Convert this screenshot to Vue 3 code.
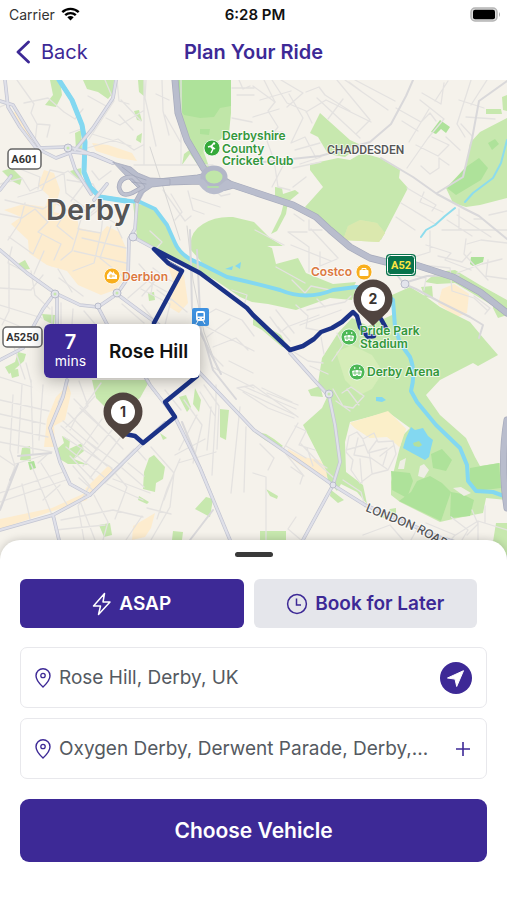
<script setup>
import { ref } from 'vue'

const pickup = ref('Rose Hill, Derby, UK')
const destination = ref('Oxygen Derby, Derwent Parade, Derby,...')
const mode = ref('asap')

const parks = [
  'M50 80H60L62 95L56 107L45 105L53 95Z',
  'M83 80H114L113 93L108 99L98 92L87 89Z',
  'M138 80H144L145 97L139 92Z',
  'M134 111L139 110L142 121L137 120Z M137 136L142 133L141 143L136 140Z',
  'M182 165L184 154L200 142L206 158L210 170L200 168L190 154Z',
  'M75 133L81 130L82 150L76 150Z M70 171L81 168L82 180L76 178Z',
  'M133 203L150 206L165 222L173 241L185 257L202 264L228 277L254 280L280 290L303 297L333 290L356 288L352 300L330 298L296 310L268 304L252 302L240 297L215 280L182 262L155 250L137 237Z',
  'M191 250Q188 233 203 224Q215 216 233 217L254 222L270 238L253 240L272 248L276 264L298 258L306 273L333 284L356 282L352 290L330 292L303 298L280 291L254 281L228 278L205 266Z',
  'M2 171L12 168L22 178L20 185L12 181Z',
  'M310 133L320 113L350 140L361 145L345 157L328 154L318 137Z',
  'M310 164L338 158L350 160L362 153L380 158L400 170L399 178L408 188L381 240H343L323 222L305 207L323 187L310 170Z',
  'M507 118L480 132L470 143L466 167L446 188L453 203L466 207L480 205L507 198Z',
  'M275 187L282 188L283 194L295 190L299 193L288 202L286 214L277 231L271 234L281 214L284 202L275 197Z',
  'M253 230L270 238L283 246H253Z',
  'M425 282L437 272L455 270L480 285L507 300V314L480 298L455 283L437 284Z',
  'M421 287L432 286L433 298L425 297Z M494 293L507 305V315L498 318L493 308Z',
  'M392 295L410 287L425 296L440 307L470 322L485 340L498 355L478 366L473 363L440 380L426 395L440 415L466 438L475 457L480 466L507 462V500L486 498L483 513L453 519L440 522L400 502L391 495V482L403 435L410 428L388 412L350 422L345 442L346 472L363 485L367 504L357 492L341 484L337 491L328 481L326 470L303 425L322 408L329 393L318 383L322 358L338 333L352 318L368 326L392 315Z',
  'M253 315L267 327L281 335L288 348L282 347L262 330L253 325Z',
  'M92 380H150L140 398L115 417L96 398Z',
  'M22 448L30 446L31 461L20 460Z M57 449L64 443L62 436L70 440L69 449L82 443L84 451L74 459L89 465L81 464L68 464L58 458Z',
  'M149 458L154 455L165 467L163 479L156 483L155 492L143 489L144 472Z',
  'M139 496L149 502L147 504L138 500Z M99 525L110 523L112 535L104 537Z',
  'M206 497L213 499L210 517L195 509Z M173 531L183 532L182 540H172Z',
  'M220 409L229 410L226 440L220 437Z M195 388L201 400L199 412L193 404Z M179 397L186 395L191 407L187 412Z',
  'M253 431L266 434L274 439L283 446L280 448L265 440Z M266 489L278 496L277 499L270 496Z',
  'M260 531H286V540H260Z M331 490L344 500L338 503L330 496Z',
  'M308 390L320 386L323 397L311 396Z M160 433L167 438L163 440Z',
  'M42 314L55 315L54 325L44 320Z M18 352L26 354L24 361L15 369L9 374L5 367L15 362Z M10 370L18 369L19 376L12 378Z',
  'M18 264L25 260L30 269L22 270Z M148 293L154 292L155 300L149 301Z',
  'M486 109L501 109L502 114L486 114Z M502 97L507 95V111L503 110Z',
  'M379 509L386 515L390 509L396 508V517L380 518Z M496 523H507V560L492 548Z'
]
const fields = [
  'M178 80H231V106L220 108L214 117L200 118L184 115L179 108Z',
  'M200 129L210 129L209 135L200 134Z',
  'M431 132L440 120L450 127L446 133L441 129L436 134Z',
  'M447 188L466 167L479 158L488 168L481 180L456 195Z',
  'M488 143L495 139L499 144L492 150Z',
  'M471 257L484 257L483 262L473 266L470 264Z',
  'M391 471L410 473L413 481L407 498L392 490Z',
  'M411 492L417 481L430 476L442 483L451 492L441 521L399 501Z',
  'M451 492L462 494L474 500L470 516L450 518Z',
  'M470 468L499 463L501 488L476 491L469 482Z',
  'M431 454L442 449L452 460L446 471L433 468Z',
  'M28 462L34 461L36 468L30 470Z'
]
const lawns = [
  'M336 352L352 345L372 355L383 372L372 389L360 395L345 380Z',
  'M343 240L348 226L360 220L377 223L385 233L379 242Z'
]
const commercial = [
  'M12 114L18 109L30 136L34 145L28 141Z',
  'M44 170L54 173L60 190L54 212L77 218L79 228L101 233L107 226L119 232L126 248L126 278L115 290L101 295L78 285L67 271L47 265L29 253L28 240L11 224L21 217L4 210L24 204L45 207L49 196L38 186Z',
  'M92 143L108 145L132 153L137 161L118 158L96 151Z',
  'M167 263L184 275L188 303L179 313L169 307L174 284Z',
  'M29 236L54 251L67 270L50 266L29 252Z',
  'M68 385L71 393L65 420L54 426L55 447L44 447L47 419L56 397Z',
  'M85 489L109 465L113 470L91 493Z M0 519L52 508L85 493L87 500L53 511L0 529Z',
  'M133 526L145 519L155 513L151 528L145 537L132 540Z',
  'M288 449L303 457L320 460L330 475L326 478L304 468L287 455Z',
  'M442 289L454 284L469 294L467 313L457 317L438 304Z',
  'M350 423L388 411L406 429L399 447L387 434L370 438L355 428Z'
]
const minor = [
  'M0 107L7 104M17 80L34 104L31 113L37 124L50 125L47 137M24 103L48 98L64 112M37 124L35 142M64 112L75 119L83 109M70 133L81 129M88 96L106 106L93 130M105 80L114 101L89 139M121 100L141 121M119 115L133 130M146 80L145 98L156 146M162 80L163 111L169 135M156 94L169 100M144 80V164M134 165H213M181 80V165M165 115L181 143M84 149L118 139L134 150L143 145M92 134L131 146M106 118L120 125L143 111M117 80L119 101L129 104',
  'M0 184L22 178L30 191L68 171L84 184L71 201M18 197L42 190L50 170L64 173L66 193L84 207M20 169L40 177L38 189M5 200L43 209L54 202L67 210L57 226L73 239M0 214L22 218L35 209L48 222L38 232L61 244L54 260M25 203L20 222L8 240M9 237L33 254L42 234M67 180L93 184L102 202L90 214L74 203M92 171L99 180L111 171M66 210L82 216L78 229L101 233L103 216L115 223L122 238M89 217L106 204M79 228L72 251L61 260M101 233L94 263L73 271M74 251L126 263M82 238L126 248M111 226L100 258L126 279M58 269L72 292M44 251L34 274M150 231L162 242L155 250M139 264L153 280L151 294M153 268L161 274L142 296M160 276L174 282M157 290L171 300M163 190L185 221L191 216M171 194L182 212L175 220M188 191L193 210L204 214M192 198L220 207M214 189L221 196L230 194',
  'M232 88H254M239 80L243 89L250 86M237 95H254M232 118L252 122M253 86L275 102L268 111L278 127L267 141L274 160L278 187L290 190M272 80L287 103L306 111L312 123M289 94L303 118L291 143L305 137L316 158M253 117L279 109M260 100L291 91M253 134L283 132M281 80L303 93L287 107M306 92L319 87L325 95M306 112L326 100L371 122M325 95L350 111M337 80L370 120L356 134M345 80L388 110M343 99L328 119M355 80L395 101M295 150L320 143M300 164L321 157M293 168L321 162M361 91L349 82M317 98L360 138M396 108L421 122L430 113L436 121M402 121L418 131M420 100L444 119L428 138L407 168M444 83L441 104L422 93M448 81L435 101M429 109L409 142M432 137L449 145L438 156L416 145M421 166L430 174L439 168L439 158L449 165M446 137L460 150M471 80L457 124L465 137M487 80L471 105M466 117L495 119M459 100L484 108M461 124L472 136M407 188L436 205L432 211M424 192L420 202L443 212M414 211L435 224M401 203L426 218M396 217L415 230M442 230H507M447 220L472 236M457 215L491 237M459 209V230M474 219H482M507 211L489 215',
  'M285 162L272 187M293 187L306 177M309 220V230H322M255 230L284 245M264 80L275 102M307 232L288 232L309 247V272M311 229L338 258M291 245L331 261M294 214L304 221',
  'M276 267L305 283M320 252V266L337 259M292 280L305 293L311 286L330 290M296 305L308 316L306 328L321 331M307 310L345 302L351 296M276 310L294 333M270 317L281 332L287 327L319 315M300 325L341 310M317 299L325 307M294 352L308 361L323 363M278 327L290 341M321 337L324 354M310 366L328 374M337 333L343 345L332 361',
  'M402 273L426 278L424 290M421 265L450 268L452 291L474 298L487 310M426 245L451 253L445 260L471 270M438 256L462 262L471 252M467 244L481 240L507 243M457 273L482 264L502 259M485 299L499 304M466 239L464 254L488 280M488 260L486 276L507 279M474 296L490 308L485 314M430 231V252L414 257',
  'M0 400L49 411M0 414L45 424M0 427L48 437M0 442L52 452M0 456L15 466M13 395L10 450L15 466L0 508M22 385L18 453M31 380L33 454M43 385L39 440M0 493L63 472M15 464L51 453M0 502L69 479M31 464L52 515M22 484L30 519M41 463L69 508M50 452L38 463M43 500L60 485M79 478L95 492M73 466L90 486M70 456L93 480M66 447L104 477M64 437L112 468M61 426L107 466M80 408L115 440M68 413L98 444M63 421L97 450M74 399L123 449M95 396L77 416L70 430M102 419L74 459M112 430L83 466M120 438L90 478M134 449L101 483M87 441L119 464M111 468L127 487L115 519M94 495L108 522L103 540M80 501L95 540M107 484L143 500M113 479L150 493M128 463L144 476M122 468L144 487M61 520L113 510L143 517M55 530L105 525M89 487L78 506L84 540M123 465L105 483M137 450L146 460',
  'M151 447L174 473L164 500M174 473L170 507L151 540M180 459L167 489L157 519M147 508L171 514M142 516L126 540M184 400L202 425L193 463M197 415L179 450M165 390L181 410M175 455L205 439M178 463L216 452M204 385L219 406L217 449M211 407L207 450M200 392L215 416M216 385V404L212 475M240 407L231 493M246 427L244 492',
  'M0 288L31 290L43 275M0 305L42 318M9 263V311L2 325M31 271L35 295L50 309M52 307V324M61 303V324M73 309L72 324M84 311L95 324M0 318L19 326M14 347L25 379M31 382L26 363M69 380L58 403M79 381L88 406L66 427M101 383L86 404M0 377L32 387M12 247L8 263L29 274M142 305L158 325M141 289L170 304L165 325M122 304L144 323M137 275L167 292M170 298L187 312M128 298L151 278M59 278L83 296M204 316L216 309L242 320L254 336M207 337L230 319M213 347L236 338L248 350M211 354L223 366M229 361L253 373M205 326L254 351M212 367L254 388M232 290L247 295L244 306',
  'M237 388L253 385L298 417M237 388L295 415M245 387L296 409M262 388L292 402M267 393L298 405M243 392L268 408L294 418M253 473L266 477V540M298 423L283 450M295 426L306 431L299 445L315 450M286 446L306 458M301 444L319 463L327 468M307 448L313 466M260 444L274 458L268 470M296 517L288 529L301 540M286 454L303 475L300 484',
  'M349 436L357 432L363 439L374 433L378 442L393 441L396 454L388 470L372 474L360 483L351 470L353 460L346 452ZM358 438L354 455L371 458L387 469M363 440L368 453L387 448M377 440L369 451L372 473M346 450L364 445M360 459L362 483M387 452L383 465M393 446L380 456M333 389L343 406L353 408L364 396L351 387L342 393M347 389L359 405M336 401L350 411M343 480L361 492L365 507M314 460L334 478M291 467L304 476',
  'M363 535L390 525L403 540M404 519L417 529L411 540M426 523L455 535L447 545M451 517L468 530L462 540M472 510L478 524L467 535M454 536L478 521L507 530M478 521V540M435 541L461 546M485 506V523'
]
const major = [
  'M5 80L8 107L20 127L36 148L68 147L80 150L113 163',
  'M0 101L13 105L28 130L42 151',
  'M113 163L93 154L72 152L56 158L36 148',
  'M11 176L0 190M68 148L75 169L91 194M107 184L94 200',
  'M75 150L93 128L113 98L116 80',
  'M147 184L137 203L135 229L129 239L128 278L117 294L98 307L80 305L55 293L27 273L0 250',
  'M133 237L157 250M117 294L137 309L159 325L200 373L254 430L286 452L333 485L365 505L439 537L507 558',
  'M98 307L109 328L143 373L150 385L175 417L200 468L230 540',
  'M55 293L43 309L33 327L23 348L0 360M57 296V325',
  'M67 380L63 397L50 428L60 462L70 484L90 495',
  'M0 530L53 515L90 495L143 443L165 423M53 515L59 540',
  'M290 353L316 382L329 396L335 425L340 462L333 485L303 540'
]
const lanes = [
  'M253 163L320 156L335 152L370 142L391 124L406 96L413 80',
  'M381 158L413 177L437 194L465 209L479 216L507 239',
  'M437 193L463 177L472 139L479 101L507 81',
  'M391 267L404 284L416 289L440 302L470 317L483 325L479 338M404 283L427 276L459 275',
  'M190 230L192 308L205 342L213 370L236 399M197 250L201 334L221 374',
  'M18 456L51 453M10 480L18 464L0 510M182 422L213 498M213 510L190 540'
]
const highways = [
  'M175 80L178 113L187 140L204 169L214 177',
  'M150 183L168 181L198 178Q214 174 230 184L254 192L293 205L316 217L330 230L350 247L370 258L386 262L416 265L453 277L480 292L507 313',
  'M146 183L168 182L200 181Q214 191 230 186',
  'M507 420Q500 462 507 508'
]
const river = 'M59 80L72 100L82 125L85 142L84 172L90 187L100 197L120 200L140 202L155 209L167 225L175 243Q181 257 201 264L227 277Q250 282 280 290Q306 301 333 290L356 287L383 291L393 300L395 327L400 343L410 357Q416 372 411 391L417 402L436 425L460 448L467 465L468 481L476 491L493 492L507 497'
</script>

<template>
  <div class="screen">
    <div class="status">
      <div class="carrier">
        <span>Carrier</span>
        <svg width="19" height="14" viewBox="0 0 19 14" aria-hidden="true">
          <path d="M1.3 5.2C5.9.7 13.1.7 17.7 5.2M4.2 8.2C7.2 5.4 11.8 5.4 14.8 8.2" fill="none" stroke="#000" stroke-width="2.4" />
          <path d="M6.3 10.2Q9.5 7.7 12.7 10.2L9.5 13.4Z" />
        </svg>
      </div>
      <span class="time">6:28 PM</span>
      <svg class="battery" width="31" height="15" viewBox="0 0 31 15" aria-hidden="true">
        <rect x="1" y="1" width="26" height="13" rx="4" fill="#ddd" stroke="#b5b5b5" stroke-width="1.500" />
        <rect x="3" y="2.700" width="22" height="9.600" rx="2" />
        <path d="M29 5Q31 7.500 29 10Z" fill="#aaa" />
      </svg>
    </div>

    <header class="nav">
      <a class="back" href="#">
        <svg width="14" height="24" viewBox="0 0 14 24" aria-hidden="true">
          <path d="M12.500 2L2 12L12.500 22" fill="none" stroke="currentColor" stroke-width="2.800" stroke-linecap="round" stroke-linejoin="round" />
        </svg>
        Back
      </a>
      <h1>Plan Your Ride</h1>
    </header>

    <main class="map">
      <svg class="canvas" viewBox="0 80 507 480" preserveAspectRatio="xMidYMin slice" role="img" aria-label="Map of Derby">
        <rect y="80" width="507" height="480" fill="#f5f2eb" />
        <path v-for="d in commercial" :key="d" :d="d" fill="#fdecce" />
        <path v-for="d in parks" :key="d" :d="d" fill="#c7e8ae" />
        <path d="M177 80H231V113L229 133L214 144L204 150L199 158L188 149L183 130Z" fill="#c0e6a8" />
        <path v-for="d in fields" :key="d" :d="d" fill="#aee29a" />
        <path v-for="d in lawns" :key="d" :d="d" fill="#d5edb8" />
        <path d="M343 240L348 226L360 220L377 223L385 233L379 242Z" fill="#dbe8ae" />
        <path d="M350 423L388 411L406 429L400 447L387 437L370 438L355 428Z" fill="#fbefc9" />
        <path d="M400 461L406 458L404 469L398 469ZM420 466L424 464L429 470L424 478L418 476ZM453 488L461 487L471 493L464 496Z" fill="#eeeee4" />
        <g fill="none" stroke-linejoin="round" stroke-linecap="round">
          <path v-for="d in minor" :key="d" :d="d" stroke="#e4e2e0" stroke-width="1.3" />
          <path d="M150 147L164 190L180 240M187 226L193 280L204 332L218 370" stroke="#d8d7d5" stroke-width="1" />
          <path :d="river" stroke="#83d8f1" stroke-width="4" />
          <path d="M59 80L72 100L82 125L85 142L84 172L90 187L100 197L126 201" stroke="#83d8f1" stroke-width="5" />
          <path d="M507 140L501 163L493 178L473 193L465 202M455 208L445 216L435 225L426 230L421 237" stroke="#8ddced" stroke-width="2" />
          <path v-for="d in lanes" :key="d" :d="d" stroke="#d9d8da" stroke-width="2" />
          <path v-for="d in major" :key="d" :d="d" stroke="#c3c5d2" stroke-width="3.600" />
          <path v-for="d in major" :key="d" :d="d" stroke="#dfe0e9" stroke-width="2.200" />
          <path v-for="d in highways" :key="d" :d="d" stroke="#a6aabb" stroke-width="7" />
          <path v-for="d in highways" :key="d" :d="d" stroke="#b9bdcd" stroke-width="5.600" />
          <path d="M113 162L131 167L138 173L150 178L170 179V185L152 187L143 193L138 203L134 201L140 190L128 178Z" fill="#b9bdcd" stroke="#a6aabb" stroke-width=".8" />
          <path d="M143 187L133 177Q120 176 119 187Q121 198 132 193L143 187" stroke="#a7abbd" stroke-width="4.500" />
          <path d="M143 187L133 177Q120 176 119 187Q121 198 132 193L143 187" stroke="#bfc2d0" stroke-width="3" />
          <path d="M122 167L134 176L146 180M132 182L146 184" stroke="#9fa4b8" stroke-width=".8" />
          <ellipse cx="214" cy="177" rx="11" ry="9" fill="#c0e6a8" stroke="#b3b7c8" stroke-width="5" />
          <path d="M202 183Q213 198 227 184" stroke="#b9bdcd" stroke-width="7" />
          <path d="M208 187H218" stroke="#b4dcab" stroke-width="2" />
        </g>
        <g fill="#e3e4ec" stroke="#b9bcca">
          <circle cx="55" cy="294" r="4" /><circle cx="117" cy="293" r="4" />
          <circle cx="68" cy="148" r="4" /><circle cx="133" cy="237" r="4" />
          <circle cx="98" cy="306" r="3" /><circle cx="329" cy="394" r="4" />
          <circle cx="333" cy="485" r="3" /><circle cx="405" cy="284" r="4" />
        </g>
        <g fill="#c7e8ae">
          <circle cx="55" cy="294" r="1.500" /><circle cx="329" cy="394" r="1.500" />
          <circle cx="68" cy="148" r="1.500" /><circle cx="117" cy="293" r="1.500" />
        </g>
        <path d="M411 427L415 430L423 428L428 436L433 440L431 448L429 457L425 460L412 453L403 448L406 438ZM376 397H382L386 400L382 402L376 401Z" fill="#83d8f1" />
        <path d="M413 443L419 441L422 445L419 447L414 446Z" fill="#b3df9f" />
        <path d="M225 269L233 266L232 270ZM235 266L241 262L240 269Z" fill="#83d8f1" />

        <g fill="none" stroke="#1b3287" stroke-width="4.500" stroke-linecap="round" stroke-linejoin="round">
          <path d="M154 323L182 271L168 263L154 249L200 273L247 308L253 315L290 350L303 346L314 339L321 332L332 328L342 322L353 312L357 316L360 327L368 337L374 336M381 319L386 328" />
          <path d="M197 376L165 402L175 417L143 443L135 436L125 434" />
        </g>
        <path d="M170 262L181 268" stroke="#7384ae" stroke-width="1" />

        <g class="halo place">
          <text class="city" x="46" y="220">Derby</text>
          <text class="district" x="327" y="154">CHADDESDEN</text>
          <path id="london-road" d="M365 511L417 532L470 562" fill="none" stroke="none" />
          <text class="street"><textPath href="#london-road">LONDON ROAD</textPath></text>
        </g>
        <g class="halo poi">
          <text y="140"><tspan x="222">Derbyshire</tspan> <tspan x="222" dy="13">County</tspan> <tspan x="222" dy="12">Cricket Club</tspan></text>
          <text y="335"><tspan x="360">Pride Park</tspan> <tspan x="360" dy="13">Stadium</tspan></text>
          <text x="367" y="376">Derby Arena</text>
          <text class="shop" x="122" y="281">Derbion</text>
          <text class="shop" x="311" y="276">Costco</text>
        </g>
        <g stroke="#fff" stroke-width=".8">
          <circle cx="212" cy="148" r="8" fill="#35a93a" />
          <circle cx="349" cy="337" r="8" fill="#4db856" />
          <circle cx="357" cy="372" r="8" fill="#4db856" />
          <circle cx="112" cy="276" r="8" fill="#f8ae1c" />
          <circle cx="364" cy="272" r="8" fill="#f8ae1c" />
        </g>
        <path d="M213 144L211 147L213 149L211 153M208 147L211 146L215 149" fill="none" stroke="#fff" stroke-width="1.500" />
        <circle cx="214" cy="143.500" r="1.200" fill="#fff" />
        <g fill="#fff">
          <g v-for="[x, y] in [[349, 337], [357, 372]]" :key="x" :transform="`translate(${x} ${y})`">
            <path d="M-5 -1Q0 -3 5 -1L4 4H1Q0 2 -1 4H-4ZM-3 -5L-1 -4L-3 -3ZM2 -5L4 -4L2 -3Z" />
            <path d="M-4 1H4M-2 -2V3M2 -2V3" stroke="#4db856" stroke-width=".7" />
          </g>
          <path d="M107 275L110 271L113 273V271L115 274L117 275V279H107Z" />
          <path d="M109 276H115M111 274V278" stroke="#f8ae1c" stroke-width=".8" />
          <rect x="359.500" y="270" width="9" height="6" rx="1" />
          <path d="M362 270V268.500H366V270" fill="none" stroke="#fff" />
        </g>
        <g>
          <rect x="192" y="308" width="17" height="18" rx="2" fill="#3f92e0" />
          <rect x="196" y="311" width="9" height="10" rx="2" fill="#fff" />
          <rect x="197.500" y="313" width="6" height="3.500" fill="#3f92e0" />
          <path d="M198 321L196 324M203 321L205 324" stroke="#fff" />
          <path d="M198 318.500H199.500M202 318.500H203.500" stroke="#3f92e0" />
        </g>
        <g class="shield">
          <rect x="8" y="149" width="33" height="20" rx="4" /><text x="24.500" y="163">A601</text>
          <rect x="3" y="327" width="39" height="20" rx="4" /><text x="22.500" y="341">A5250</text>
        </g>
        <g class="shield primary">
          <rect class="rim" x="386" y="254" width="30" height="22" rx="4" />
          <rect x="387.500" y="255.500" width="27" height="19" rx="3" /><text x="401" y="269">A52</text>
        </g>
        <g v-for="pin in [{ n: 1, x: 123, y: 412 }, { n: 2, x: 373, y: 299 }]" :key="pin.n" class="pin" :transform="`translate(${pin.x} ${pin.y})`">
          <path d="M0 27L-14.500 13A19.500 19.500 0 1 1 14.500 13Z" />
          <circle r="12" />
          <text y="5">{{ pin.n }}</text>
        </g>
      </svg>

      <div class="callout">
        <div class="eta"><strong>7</strong><span>mins</span></div>
        <div class="stop">Rose Hill</div>
      </div>
    </main>

    <section class="sheet">
      <div class="handle"></div>
      <div class="modes">
        <button type="button" class="mode" :class="{ active: mode === 'asap' }" @click="mode = 'asap'">
          <svg width="20" height="24" viewBox="0 0 20 24" aria-hidden="true">
            <path d="M12.500 1.500L1.500 14H8.500L6.500 22.500L18 10H11L12.500 1.500Z" fill="none" stroke="currentColor" stroke-width="1.500" stroke-linejoin="round" />
          </svg>
          ASAP
        </button>
        <button type="button" class="mode" :class="{ active: mode === 'later' }" @click="mode = 'later'">
          <svg width="22" height="22" viewBox="0 0 22 22" aria-hidden="true">
            <circle cx="11" cy="11" r="9.400" fill="none" stroke="currentColor" stroke-width="1.500" />
            <path d="M10.500 5.500V12H15" fill="none" stroke="currentColor" stroke-width="1.500" />
          </svg>
          Book for Later
        </button>
      </div>

      <div class="fields">
        <div class="field">
          <label for="pickup" aria-label="Pickup">
            <svg width="16" height="20" viewBox="0 0 16 20" aria-hidden="true">
              <path d="M8 19Q1 12.500 1 7.700A7 6.900 0 0 1 15 7.700Q15 12.500 8 19Z" fill="none" stroke="currentColor" stroke-width="1.400" />
              <circle cx="8" cy="7.500" r="2.200" fill="none" stroke="currentColor" stroke-width="1.300" />
            </svg>
          </label>
          <input id="pickup" v-model="pickup" type="text">
          <button type="button" class="locate" aria-label="Use current location">
            <svg width="32" height="32" viewBox="0 0 32 32" aria-hidden="true">
              <circle cx="16" cy="16" r="16" fill="currentColor" />
              <path d="M23.500 8.700L7.500 16L15 17.100L16.700 24.500Z" fill="#fff" stroke="#fff" stroke-width="1" stroke-linejoin="round" />
            </svg>
          </button>
        </div>
        <div class="field">
          <label for="destination" aria-label="Destination">
            <svg width="16" height="20" viewBox="0 0 16 20" aria-hidden="true">
              <path d="M8 19Q1 12.500 1 7.700A7 6.900 0 0 1 15 7.700Q15 12.500 8 19Z" fill="none" stroke="currentColor" stroke-width="1.400" />
              <circle cx="8" cy="7.500" r="2.200" fill="none" stroke="currentColor" stroke-width="1.300" />
            </svg>
          </label>
          <input id="destination" v-model="destination" type="text">
          <button type="button" class="add" aria-label="Add stop">
            <svg width="16" height="16" viewBox="0 0 16 16" aria-hidden="true">
              <path d="M8 1V15M1 8H15" stroke="currentColor" stroke-width="1.600" />
            </svg>
          </button>
        </div>
      </div>

      <button type="button" class="submit">Choose Vehicle</button>
    </section>
  </div>
</template>

<style>
body {
  background: #fff;
}
</style>

<style scoped>
.screen {
  --brand: #3d2996;
  display: flex;
  flex-direction: column;
  min-height: 100vh;
  font-family: Inter, "Liberation Sans", sans-serif;
  color: #111;
  background: #fff;
}

.screen *,
.screen {
  box-sizing: border-box;
}

button,
input {
  font: inherit;
  color: inherit;
  border: 0;
  margin: 0;
  padding: 0;
  background: none;
}

svg {
  display: block;
  flex: none;
}

.status {
  display: grid;
  grid-template-columns: 1fr auto 1fr;
  align-items: center;
  height: 28px;
  padding: 0 6px 0 9px;
  font-size: 14px;
}

.carrier {
  display: flex;
  align-items: center;
  gap: 6px;
  color: #333;
}

.time {
  font-size: 15px;
  font-weight: 600;
}

.battery {
  justify-self: end;
}

.nav {
  display: grid;
  grid-template-columns: 1fr auto 1fr;
  align-items: center;
  height: 52px;
  padding: 0 16px 4px;
  color: var(--brand);
}

.back {
  display: flex;
  align-items: center;
  gap: 11px;
  color: inherit;
  font-size: 20px;
  text-decoration: none;
}

h1 {
  margin: 0;
  font-size: 20px;
  font-weight: 600;
}

.map {
  position: relative;
  flex: 1;
  min-height: 480px;
  overflow: hidden;
}

.canvas {
  position: absolute;
  inset: 0;
  width: 100%;
  height: 100%;
}

.halo text {
  paint-order: stroke;
  stroke: #fff;
  stroke-opacity: 0.7;
  stroke-width: 2px;
  stroke-linejoin: round;
}

.place {
  fill: #555;
}

.city {
  font-size: 29px;
  font-weight: 600;
}

.district {
  font-family: Roboto, sans-serif;
  font-size: 12px;
  font-weight: 500;
}

.street {
  font-size: 12px;
  font-weight: 500;
}

.poi {
  font-size: 12px;
  font-weight: 600;
  fill: #34973c;
}

.shop {
  fill: #dc7840;
}

.shield rect {
  fill: #fff;
  stroke: #666;
  stroke-width: 1.5px;
}

.shield text {
  font-family: Roboto, sans-serif;
  font-size: 11px;
  font-weight: 700;
  text-anchor: middle;
  fill: #333;
}

.primary rect {
  fill: #08734c;
  stroke: #fff;
  stroke-width: 1px;
}

.primary .rim {
  fill: #08734c;
  stroke: none;
}

.primary text {
  fill: #ffe640;
}

.pin path {
  fill: #50443f;
}

.pin circle {
  fill: #fff;
}

.pin text {
  font-size: 14px;
  font-weight: 700;
  text-anchor: middle;
  fill: #3a3432;
}

.callout {
  position: absolute;
  top: 244px;
  left: 44px;
  display: flex;
  height: 54px;
  overflow: hidden;
  border-radius: 6px;
  background: #fff;
  box-shadow: 0 2px 16px rgba(0, 0, 0, 0.3);
}

.eta {
  display: flex;
  flex-direction: column;
  align-items: center;
  justify-content: center;
  width: 53px;
  color: #fff;
  background: var(--brand);
  font-size: 14px;
  line-height: 18px;
}

.eta strong {
  font-size: 20px;
  font-weight: 600;
  line-height: 20px;
}

.stop {
  display: flex;
  align-items: center;
  padding: 0 12px;
  font-size: 19px;
  font-weight: 600;
}

.sheet {
  position: relative;
  display: flex;
  flex-direction: column;
  margin-top: -20px;
  padding: 12px 20px 38px;
  border-radius: 20px 20px 0 0;
  background: #fff;
  box-shadow: 0 0 8px rgba(0, 0, 0, 0.2);
}

.handle {
  align-self: center;
  width: 38px;
  height: 5px;
  border-radius: 3px;
  background: #3a3a3a;
}

.modes {
  display: grid;
  grid-template-columns: 1fr 1fr;
  gap: 10px;
  margin-top: 22px;
  padding-right: 10px;
}

.mode {
  display: flex;
  align-items: center;
  justify-content: center;
  gap: 7px;
  height: 49px;
  border-radius: 6px;
  color: var(--brand);
  background: #e5e6eb;
  font-size: 19px;
  font-weight: 600;
}

.mode.active {
  color: #fff;
  background: var(--brand);
}

.fields {
  display: grid;
  gap: 10px;
  margin-top: 19px;
}

.field {
  display: flex;
  align-items: center;
  gap: 8px;
  height: 61px;
  padding: 0 14px;
  border: 1px solid #e8e8ec;
  border-radius: 7px;
  color: var(--brand);
}

.field input {
  flex: 1;
  min-width: 0;
  color: #555a61;
  font-size: 19px;
  text-overflow: ellipsis;
}

.add {
  padding: 0 1px;
}

.submit {
  height: 63px;
  margin-top: 20px;
  border-radius: 9px;
  color: #fff;
  background: var(--brand);
  font-size: 21px;
  font-weight: 600;
}
</style>
